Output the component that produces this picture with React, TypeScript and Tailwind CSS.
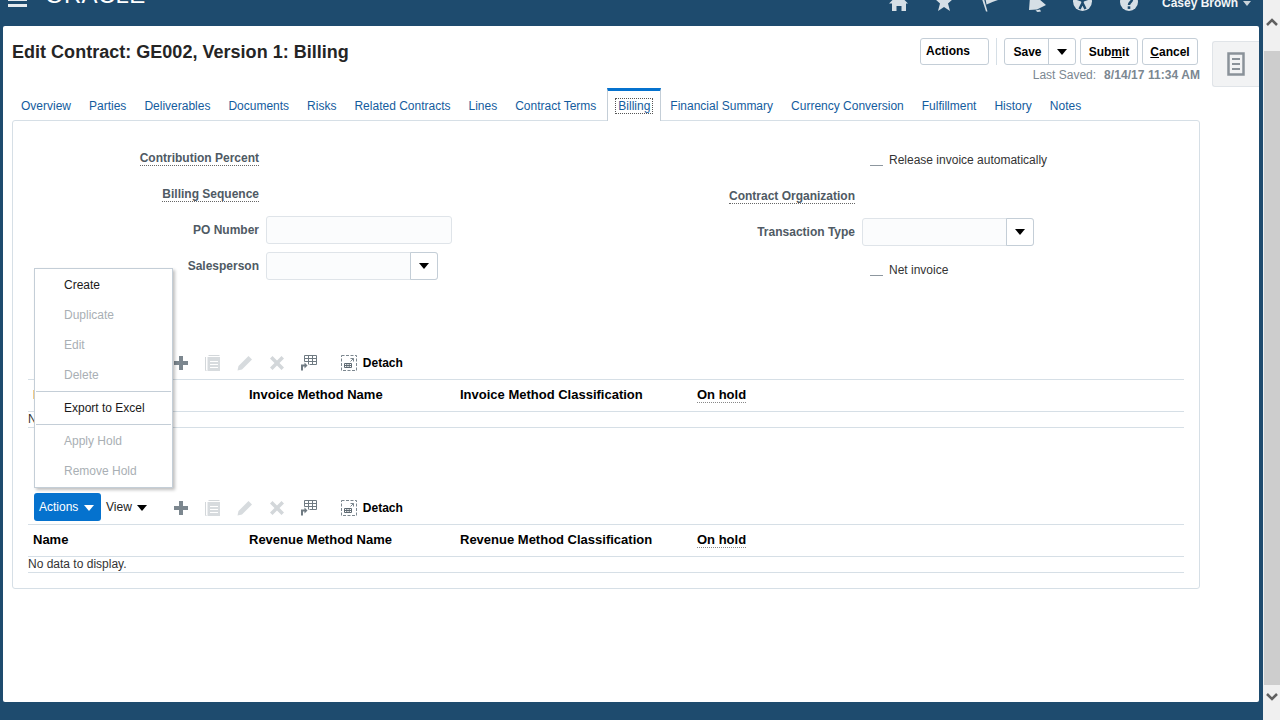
import React from "react";

const Caret = ({ className = "fill-black" }: { className?: string }) => (
  <svg width="10" height="6" viewBox="0 0 10 6" className={className}>
    <path d="M0 0h10L5 6z" />
  </svg>
);

const Plus = () => (
  <svg width="16" height="16" viewBox="0 0 16 16" className="fill-[#7c878f]">
    <path d="M6 1h4v5h5v4h-5v5H6v-5H1V6h5z" />
  </svg>
);
const Copy = () => (
  <svg width="16" height="16" viewBox="0 0 16 16" fill="none">
    <path d="M3.500 .5h11M.5 2v13.500h1" stroke="#d3d7da" strokeWidth="1" />
    <path d="M2.500 2h12.500v14H2.500z" fill="#d7dbde" />
    <path d="M5 6.500h8M5 9.500h8M5 12.500h8" stroke="#fff" strokeWidth="1" />
  </svg>
);
const Pencil = () => (
  <svg width="16" height="16" viewBox="0 0 16 16" className="fill-[#d7dbde]">
    <path d="M11.500 1 15 4.500 5 14.500 .5 15.500 1.500 11z" />
  </svg>
);
const Cross = () => (
  <svg width="16" height="16" viewBox="0 0 16 16" className="fill-[#d3d7da]">
    <path d="M3.500 1 8 5.500 12.500 1 15 3.500 10.500 8 15 12.500 12.500 15 8 10.500 3.500 15 1 12.500 5.500 8 1 3.500z" />
  </svg>
);
const TableExport = () => (
  <svg width="16" height="16" viewBox="0 0 16 16" fill="none">
    <path d="M3.500 .5h12v9h-7M3.500 .5v6M3.500 3.500h12M7.500 .5v9M11.500 .5v9M3.500 6.500h12" stroke="#6f7a82" strokeWidth="1" />
    <path d="M1 15.500v-5h3" stroke="#6f7a82" strokeWidth="2" />
    <path d="M3.500 7.500l3 3-3 3z" fill="#6f7a82" />
  </svg>
);
const DetachIcon = () => (
  <svg width="16" height="16" viewBox="0 0 16 16" fill="none">
    <path d="M.5.500h15v15H.5z" stroke="#7c878f" strokeWidth="1" strokeDasharray="3 1.500" />
    <path d="M9.500 3.500h3v3M12.500 3.500l-3 3" stroke="#7c878f" strokeWidth="1" />
    <path d="M3.500 8.500h7v4h-7zM3.500 10.500h7M5.800 8.500v4M8.200 8.500v4" stroke="#5f6a72" strokeWidth="1" />
  </svg>
);

const Toolbar = () => (
  <div className="flex h-[28px] items-center pl-[6px]">
    <div className="flex h-[28px] w-[67px] items-center rounded-[3px] bg-[#0572ce] pl-[5px] text-white">
      <span>Actions</span>
      <Caret className="ml-[6px] mt-[1px] fill-white" />
    </div>
    <span className="ml-[5px] text-[#222]">View</span>
    <Caret className="ml-[5px] mt-[1px] fill-black" />
    <div className="ml-[26px] mt-[1px] flex items-center gap-[16px]">
      <Plus />
      <Copy />
      <Pencil />
      <Cross />
      <TableExport />
    </div>
    <div className="ml-[24px] mt-[1px]"><DetachIcon /></div>
    <span className="ml-[6px] mt-[1px] font-bold text-black">Detach</span>
  </div>
);

const DataTable = ({ second, third, className = "" }: { second: string; third: string; className?: string }) => (
  <div className={className}>
    <Toolbar />
    <div className="mt-[3px] flex h-[33px] items-center border-y border-[#d6dfe6] pb-[1px] text-[13px] font-bold text-black">
      <div className="w-[221px] pl-[5px]">Name</div>
      <div className="w-[211px]">{second}</div>
      <div className="w-[237px]">{third}</div>
      <div><span className="border-b border-dotted border-[#888]">On hold</span></div>
    </div>
    <div className="flex h-[16px] items-center border-b border-[#d6dfe6] pb-[1px] text-[#333]">No data to display.</div>
  </div>
);

const DottedLabel = ({ children }: { children: React.ReactNode }) => (
  <span className="border-b border-dotted border-[#666] font-bold text-[#4f5a64]">{children}</span>
);

const LeftRow = ({ label, dotted, children }: { label: string; dotted?: boolean; children?: React.ReactNode }) => (
  <div className="flex h-[36px] items-center">
    <div className="w-[246px] text-right">
      {dotted ? <DottedLabel>{label}</DottedLabel> : <span className="font-bold text-[#4f5a64]">{label}</span>}
    </div>
    {children && <div className="ml-[7px]">{children}</div>}
  </div>
);

const TextBox = () => <div className="h-[28px] w-[186px] rounded-[3px] border border-[#dfe4e9] bg-[#fbfcfd]" />;

const Select = () => (
  <div className="flex h-[28px] w-[172px] rounded-[3px] border border-[#dfe4e9] bg-[#fbfcfd]">
    <div className="flex-1" />
    <div className="-my-px -mr-px flex w-[28px] items-center justify-center rounded-r-[3px] border border-[#c4ced7] bg-white">
      <Caret />
    </div>
  </div>
);

const RightRow = ({ label, dotted, children }: { label: string; dotted?: boolean; children?: React.ReactNode }) => (
  <div className="flex h-[36px] items-center">
    <div className="w-[200px] text-right">
      {dotted ? <DottedLabel>{label}</DottedLabel> : <span className="font-bold text-[#4f5a64]">{label}</span>}
    </div>
    {children && <div className="ml-[7px]">{children}</div>}
  </div>
);

const CheckRow = ({ label, className = "" }: { label: string; className?: string }) => (
  <div className={`flex h-[36px] items-center pl-[215px] ${className}`}>
    <div className="mt-[10px] h-px w-[13px] bg-[#8d979f]" />
    <span className="ml-[6px] text-[#333]">{label}</span>
  </div>
);

const tabs = ["Overview", "Parties", "Deliverables", "Documents", "Risks", "Related Contracts", "Lines", "Contract Terms", "Billing", "Financial Summary", "Currency Conversion", "Fulfillment", "History", "Notes"];

const TopButton = ({ children, className = "" }: { children: React.ReactNode; className?: string }) => (
  <div className={`flex h-[27px] items-center justify-center rounded-[3px] border border-[#c4ced7] bg-white font-bold text-black ${className}`}>
    {children}
  </div>
);

const MenuItem = ({ children, off }: { children: string; off?: boolean }) => (
  <div className={`flex h-[30px] items-center pl-[29px] ${off ? "text-[#a9afb4]" : "text-[#1a1a1a]"}`}>{children}</div>
);

const NAVY = "#1e4b6e";
const navIcons = [
  <path key="h" d="M9.500 -6 19 3.500h-2V11h-4.500V6h-5v5H3V3.500H0z" />,
  <polygon key="s" points="9,-7 11.500,-1 18,-1 13,3.500 15,11 9,7 3,11 5,3.500 0,-1 6.500,-1" />,
  <g key="f">
    <path d="M1 -1h2l3.500 12.500H5z" />
    <path d="M4 -4H17V0C13 1 10 3 5.500 4.500z" />
  </g>,
  <g key="b">
    <path d="M3 -3 2 10 10 9.500 19 5 12 -1 10 -3z" />
    <path d="M8.500 10.500 13 9.500 14 11.500 10.500 12z" />
  </g>,
  <g key="a">
    <circle cx="9.500" cy="1.500" r="9.500" />
    <path d="M4 -1 9.500 1 15 -1" fill="none" stroke={NAVY} strokeWidth="2" />
    <path d="M9.500 0V3L6.500 9M9.500 3 12.500 9" fill="none" stroke={NAVY} strokeWidth="2.500" />
  </g>,
  <g key="q">
    <circle cx="10" cy="2" r="9" />
    <path d="M7 -1C7.500 -4 13 -4 13 -.5 13 2 10 2 10 5" fill="none" stroke={NAVY} strokeWidth="2.500" />
    <rect x="8.700" y="6.300" width="2.600" height="2.600" fill={NAVY} />
  </g>,
];

export default function App() {
  return (
    <div className="flex h-[720px] w-[1280px] overflow-hidden bg-[#1e4b6e] font-['Liberation_Sans',Arial,sans-serif] text-[12px] leading-[14px]">
      <div className="flex w-[1263px] flex-col">
        <header className="flex h-[26px] items-start overflow-hidden text-white">
          <div className="ml-[8px] mt-[-1px] flex w-[19px] flex-col gap-[3px]">
            <div className="h-[2px] bg-[#e6ebef]" />
            <div className="h-[3px] bg-[#e6ebef]" />
          </div>
          <div className="ml-[18px] mt-[-17px] text-[24px] leading-[24px] tracking-[0.3px] text-white">ORACLE</div>
          <div className="ml-auto flex items-start">
            {navIcons.map((icon, i) => (
              <div key={i} className="flex w-[46px] justify-center">
                <svg width="18" height="20" viewBox="0 -8 18 20" className="-mt-[8px] overflow-visible fill-[#d6dfe6]">
                  {icon}
                </svg>
              </div>
            ))}
            <span className="ml-[11px] mt-[-4px] font-bold text-[#f2f5f7]">Casey Brown</span>
            <Caret className="ml-[5px] mr-[12px] mt-[1px] h-[5px] w-[8px] fill-[#c9d3da]" />
          </div>
        </header>

        <div className="ml-[3px] flex h-[676px] w-[1256px] rounded-[2px] bg-white">
          <main className="relative w-[1197px] pl-[9px]">
            <div className="flex h-[62px] justify-between pt-[12px]">
              <h1 className="flex h-[27px] items-center text-[18px] font-bold tracking-[0.02px] text-[#252525]">Edit Contract: GE002, Version 1: Billing</h1>
              <div className="flex flex-col items-end">
                <div className="mr-[2px] flex items-start">
                  <TopButton className="w-[69px] !justify-start pb-[2px] pl-[5px]">Actions</TopButton>
                  <div className="ml-[7px] h-[27px] w-px bg-[#d6dfe6]" />
                  <div className="ml-[7px] flex h-[27px] w-[72px] rounded-[3px] border border-[#c4ced7] font-bold text-black">
                    <div className="flex w-[44px] items-center justify-center border-r border-[#c4ced7] pl-[2px]">Save</div>
                    <div className="flex flex-1 items-center justify-center"><Caret /></div>
                  </div>
                  <TopButton className="ml-[4px] w-[58px]"><span>Sub<span className="underline">m</span>it</span></TopButton>
                  <TopButton className="ml-[4px] w-[56px]"><span><span className="underline">C</span>ancel</span></TopButton>
                </div>
                <div className="mt-[3px] text-[#7b8791]">
                  Last Saved:<span className="ml-[8px] font-bold tracking-[0.06px]">8/14/17 11:34 AM</span>
                </div>
              </div>
            </div>

            <nav className="relative z-10 -mb-px flex h-[33px] text-[#145c9e]">
              {tabs.map((t) =>
                t === "Billing" ? (
                  <div key={t} className="ml-[2px] flex h-[33px] items-center border-x border-t-[3px] border-x-[#c4ced7] border-t-[#0572ce] bg-white px-[8px]">
                    <span className="px-[2px] outline outline-1 outline-dotted outline-[#555]">{t}</span>
                  </div>
                ) : (
                  <div key={t} className="flex h-[32px] items-center border-x border-transparent px-[8px] pt-[3px]">{t}</div>
                )
              )}
            </nav>

            <section className="relative rounded-[3px] border border-[#d6dfe6] px-[15px] pb-[15px] pt-[19px]">
              <div className="-ml-[15px] flex">
                <div className="w-[642px]">
                  <LeftRow label="Contribution Percent" dotted />
                  <LeftRow label="Billing Sequence" dotted />
                  <LeftRow label="PO Number"><TextBox /></LeftRow>
                  <LeftRow label="Salesperson"><Select /></LeftRow>
                </div>
                <div className="pt-[2px]">
                  <CheckRow label="Release invoice automatically" />
                  <RightRow label="Contract Organization" dotted />
                  <RightRow label="Transaction Type"><Select /></RightRow>
                  <CheckRow label="Net invoice" className="mt-[2px]" />
                </div>
              </div>

              <DataTable className="mt-[60px]" second="Invoice Method Name" third="Invoice Method Classification" />
              <DataTable className="mt-[65px]" second="Revenue Method Name" third="Revenue Method Classification" />

              <div className="absolute left-[21px] top-[147px] z-20 h-[220px] w-[139px] border border-[#c4ced7] bg-white pt-px shadow-[2px_2px_3px_rgba(0,0,0,0.25)]">
                <MenuItem>Create</MenuItem>
                <MenuItem off>Duplicate</MenuItem>
                <MenuItem off>Edit</MenuItem>
                <MenuItem off>Delete</MenuItem>
                <div className="mx-px mt-[1px] h-px bg-[#c4ced7]" />
                <div className="flex h-[32px] items-center pl-[29px] text-[#1a1a1a]">Export to Excel</div>
                <div className="mx-px mb-px h-px bg-[#c4ced7]" />
                <MenuItem off>Apply Hold</MenuItem>
                <MenuItem off>Remove Hold</MenuItem>
              </div>
            </section>
          </main>

          <aside className="ml-[12px] mt-[15px] flex h-[46px] w-[47px] items-center justify-center rounded-l-[3px] border border-r-0 border-[#e0e4e8] bg-[#f2f3f4]">
            <svg width="18" height="24" viewBox="0 0 18 24" fill="none" stroke="#8a9299">
              <path d="M1.500 1.500h15v21h-15z" strokeWidth="2.500" />
              <path d="M5 7h8M5 12h8M5 17h8" strokeWidth="2" />
            </svg>
          </aside>
        </div>
      </div>

      <div className="flex w-[17px] flex-col bg-[#f0f0f0] pl-px">
        <div className="flex h-[51px] justify-center pt-[18px]">
          <svg width="12" height="8" viewBox="0 0 12 8" fill="none" stroke="#606060" strokeWidth="2.500"><path d="M1 7l5-5 5 5" /></svg>
        </div>
        <div className="h-[634px] bg-[#cdcdcd]" />
        <div className="flex h-[35px] justify-center pt-[8px]">
          <svg width="12" height="8" viewBox="0 0 12 8" fill="none" stroke="#606060" strokeWidth="2.500"><path d="M1 1l5 5 5-5" /></svg>
        </div>
      </div>
    </div>
  );
}
